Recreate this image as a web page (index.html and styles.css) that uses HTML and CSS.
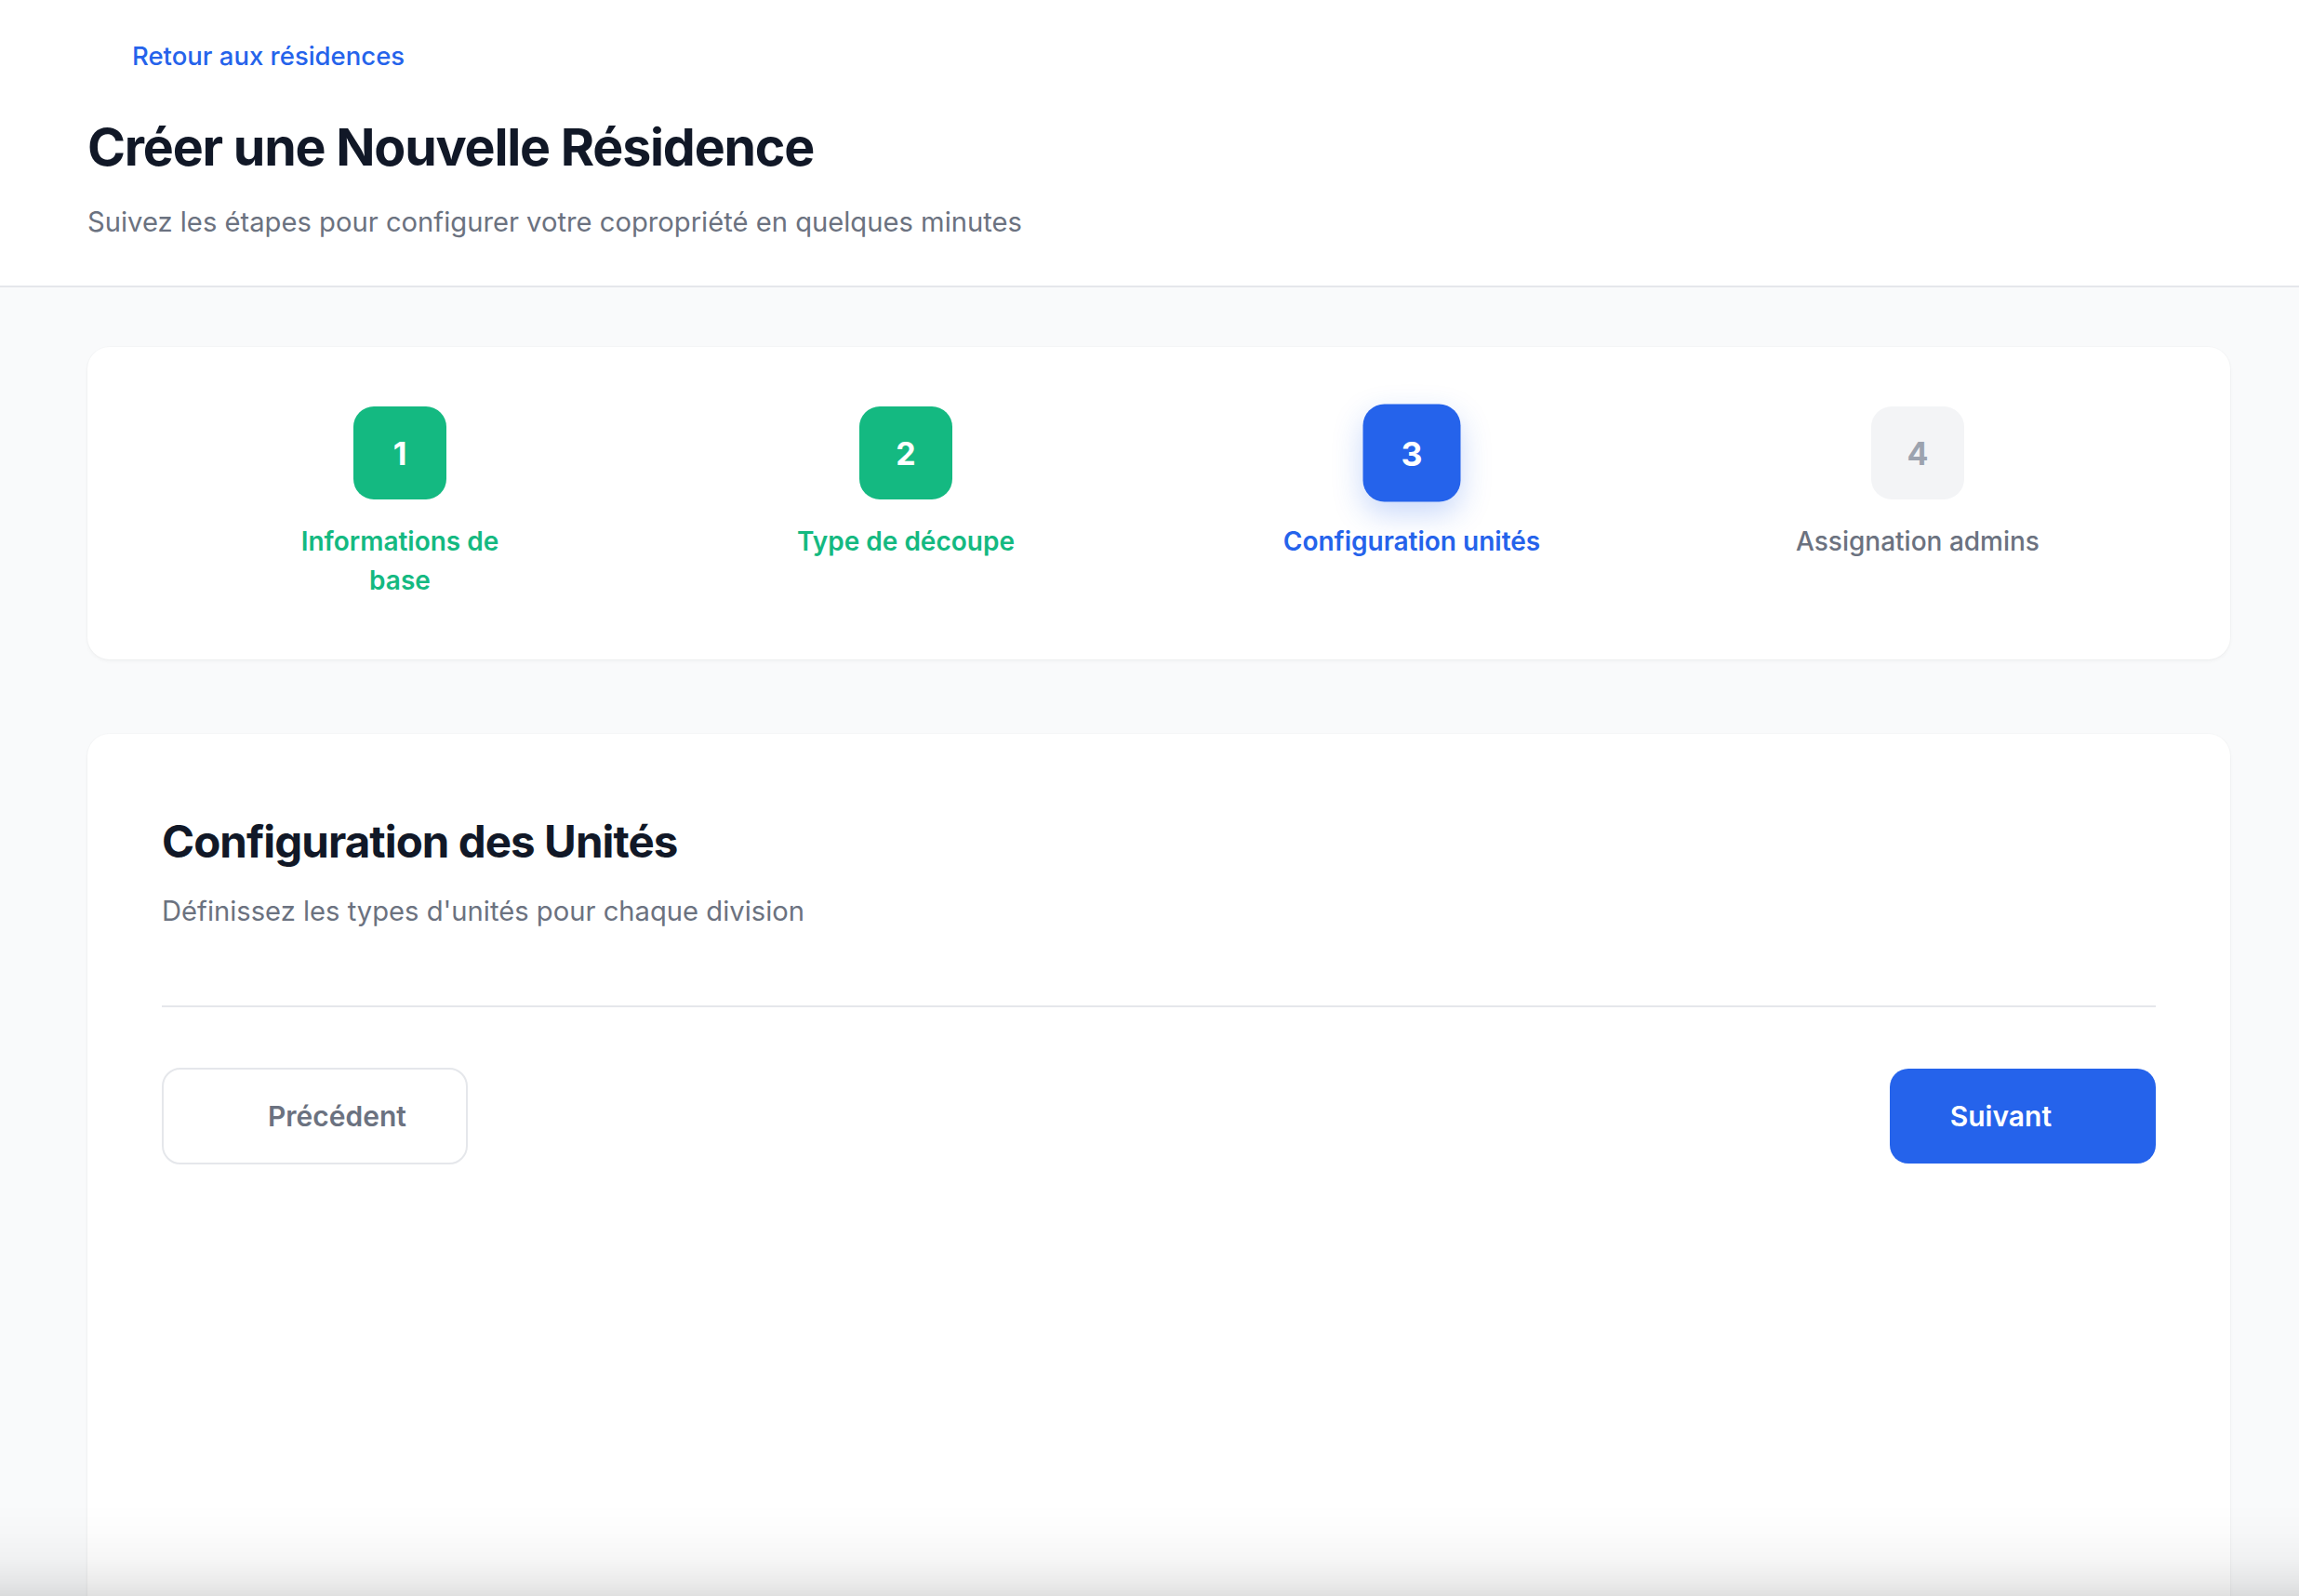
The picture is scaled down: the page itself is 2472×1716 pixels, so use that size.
FILE: index.html
```html
<!DOCTYPE html>
<html lang="fr">
<head>
<meta charset="utf-8">
<title>Créer une Nouvelle Résidence</title>
<link rel="stylesheet" href="styles.css">
</head>
<body>
<header class="page-header">
  <a class="back-link" href="#"><span class="icon-slot"></span>Retour aux résidences</a>
  <h1 class="page-title">Créer une Nouvelle Résidence</h1>
  <p class="page-subtitle">Suivez les étapes pour configurer votre copropriété en quelques minutes</p>
</header>
<main class="page-main">
  <section class="card stepper">
    <div class="step done">
      <div class="step-box">1</div>
      <div class="step-label">Informations de base</div>
    </div>
    <div class="step done">
      <div class="step-box">2</div>
      <div class="step-label">Type de découpe</div>
    </div>
    <div class="step active">
      <div class="step-box">3</div>
      <div class="step-label">Configuration unités</div>
    </div>
    <div class="step todo">
      <div class="step-box">4</div>
      <div class="step-label">Assignation admins</div>
    </div>
  </section>
  <section class="card form-card">
    <h2 class="form-title">Configuration des Unités</h2>
    <p class="form-subtitle">Définissez les types d'unités pour chaque division</p>
    <div class="form-body"></div>
    <div class="form-footer">
      <button class="btn btn-secondary" type="button"><span class="btn-icon"></span>Précédent</button>
      <button class="btn btn-primary" type="button">Suivant<span class="btn-icon"></span></button>
    </div>
  </section>
</main>
<div class="bottom-fade"></div>
</body>
</html>
```
FILE: styles.css
```css
* { box-sizing: border-box; }
html, body { margin: 0; padding: 0; }
body {
  background: #f9fafb;
  font-family: Inter, "Noto Sans", "Liberation Sans", sans-serif;
  color: #111827;
  overflow: hidden;
}
.page-header {
  background: #ffffff;
  border-bottom: 2px solid #e5e7eb;
  padding: 40px 74px 46px 94px;
}
.back-link {
  display: inline-flex;
  align-items: center;
  color: #2563eb;
  font-size: 27.5px;
  line-height: 40px;
  font-weight: 500;
  text-decoration: none;
}
.icon-slot { display: inline-block; width: 48px; height: 28px; }
.page-title {
  margin: 44px 0 0;
  font-size: 55.5px;
  line-height: 68px;
  font-weight: 700;
  letter-spacing: -0.022em;
  color: #111827;
}
.page-subtitle {
  margin: 24px 0 0;
  font-size: 29.2px;
  line-height: 45px;
  color: #6b7280;
}
.page-main {
  padding: 64px 74px 0 94px;
}
.card {
  background: #ffffff;
  border-radius: 24px;
  box-shadow: 0 2px 4px rgba(0, 0, 0, 0.04), 0 0 0 1px rgba(0, 0, 0, 0.015);
}
.stepper {
  display: grid;
  grid-template-columns: repeat(4, 1fr);
  padding: 64px 64px 64px;
}
.step {
  display: flex;
  flex-direction: column;
  align-items: center;
}
.step-box {
  width: 100px;
  height: 100px;
  border-radius: 22px;
  display: flex;
  align-items: center;
  justify-content: center;
  font-size: 34px;
  font-weight: 700;
  color: #ffffff;
}
.step-label {
  margin-top: 24px;
  max-width: 279px;
  text-align: center;
  font-size: 28px;
  line-height: 42px;
  font-weight: 600;
}
.done .step-box { background: #14b981; }
.done .step-label { color: #14b981; }
.active .step-box {
  background: #2563eb;
  transform: scale(1.05);
  box-shadow: 0 12px 30px rgba(37, 99, 235, 0.25);
}
.active .step-label { color: #2563eb; }
.todo .step-box { background: #f3f4f6; color: #9ca3af; }
.todo .step-label { color: #6b7280; font-weight: 500; }
.form-card {
  margin-top: 80px;
  padding: 80px 80px 80px;
  min-height: 1100px;
}
.form-title {
  margin: 0;
  font-size: 47.5px;
  line-height: 72px;
  font-weight: 700;
  letter-spacing: -0.02em;
  color: #111827;
}
.form-subtitle {
  margin: 16px 0 0;
  font-size: 29.2px;
  line-height: 45px;
  color: #6b7280;
}
.form-body { height: 79px; }
.form-footer {
  border-top: 2px solid #e5e7eb;
  padding-top: 65px;
  display: flex;
  justify-content: space-between;
  align-items: center;
}
.btn {
  display: inline-flex;
  align-items: center;
  gap: 16px;
  font-family: inherit;
  font-size: 30px;
  font-weight: 600;
  border-radius: 20px;
  cursor: pointer;
}
.btn-icon { display: inline-block; width: 32px; height: 32px; }
.btn-secondary {
  height: 104px;
  padding: 0 64px;
  background: #ffffff;
  border: 2px solid #e5e7eb;
  color: #6b7280;
}
.btn-primary {
  height: 102px;
  padding: 0 64px 0 65px;
  background: #2563eb;
  border: none;
  color: #ffffff;
}
.bottom-fade {
  position: fixed;
  left: 0;
  right: 0;
  bottom: 0;
  height: 100px;
  pointer-events: none;
  background: linear-gradient(to bottom, rgba(0,0,0,0) 0%, rgba(0,0,0,0.01) 30%, rgba(0,0,0,0.035) 60%, rgba(0,0,0,0.08) 85%, rgba(0,0,0,0.12) 100%);
}
```
